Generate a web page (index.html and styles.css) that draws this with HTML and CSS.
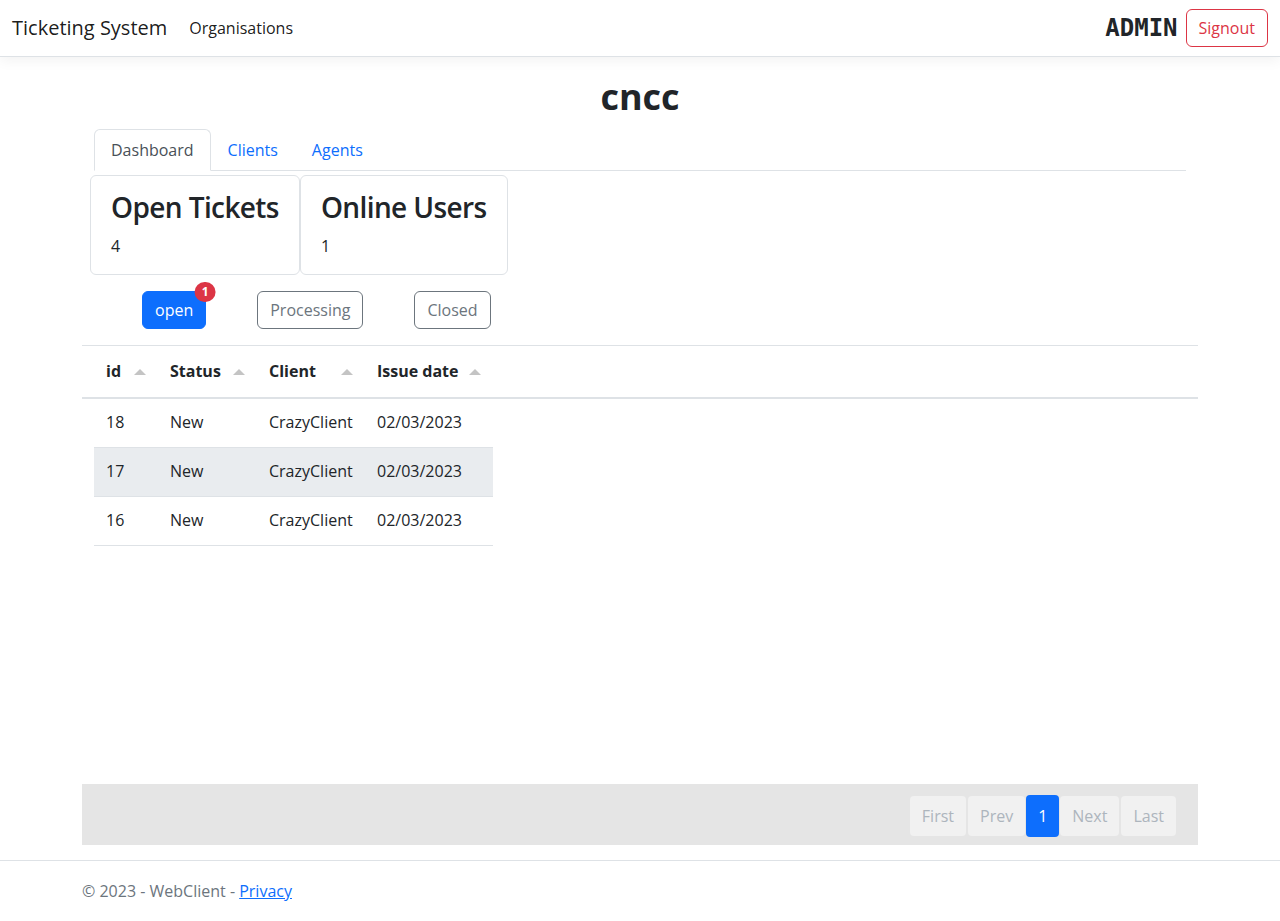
FILE: index.html
```html
<!DOCTYPE html>
<html lang="en">
<head>
<meta charset="utf-8">
<title>cncc - Ticketing System</title>
<link rel="stylesheet" href="styles.css">
</head>
<body>
<header class="navbar">
  <div class="nav-left">
    <a class="brand" href="#">Ticketing System</a>
    <a class="nav-link" href="#">Organisations</a>
  </div>
  <div class="nav-right">
    <span class="user">ADMIN</span>
    <button class="btn btn-outline-danger">Signout</button>
  </div>
</header>

<main class="container main">
  <h1 class="org-title">cncc</h1>
  <ul class="tabs">
    <li><a class="tab active" href="#">Dashboard</a></li>
    <li><a class="tab" href="#">Clients</a></li>
    <li><a class="tab" href="#">Agents</a></li>
  </ul>

  <div class="stats">
    <div class="stat-card">
      <h2 class="stat-title">Open Tickets</h2>
      <div class="stat-value">4</div>
    </div>
    <div class="stat-card">
      <h2 class="stat-title">Online Users</h2>
      <div class="stat-value">1</div>
    </div>
  </div>

  <div class="filters">
    <button class="btn btn-primary has-badge">open<span class="badge">1</span></button>
    <button class="btn btn-outline-secondary">Processing</button>
    <button class="btn btn-outline-secondary">Closed</button>
  </div>

  <div class="ticket-table">
    <div class="thead">
      <div class="row">
        <div class="th">id<span class="sort"></span></div>
        <div class="th">Status<span class="sort"></span></div>
        <div class="th">Client<span class="sort"></span></div>
        <div class="th">Issue date<span class="sort"></span></div>
      </div>
    </div>
    <div class="tbody">
      <div class="row tr">
        <div class="td">18</div><div class="td">New</div><div class="td">CrazyClient</div><div class="td">02/03/2023</div>
      </div>
      <div class="row tr hover">
        <div class="td">17</div><div class="td">New</div><div class="td">CrazyClient</div><div class="td">02/03/2023</div>
      </div>
      <div class="row tr">
        <div class="td">16</div><div class="td">New</div><div class="td">CrazyClient</div><div class="td">02/03/2023</div>
      </div>
    </div>
  </div>

  <nav class="pager-bar">
    <div class="pager">
      <span class="page disabled">First</span>
      <span class="page disabled">Prev</span>
      <span class="page active">1</span>
      <span class="page disabled">Next</span>
      <span class="page disabled">Last</span>
    </div>
  </nav>
</main>

<footer class="footer">
  <div class="container">© 2023 - WebClient - <a href="#">Privacy</a></div>
</footer>
</body>
</html>
```
FILE: styles.css
```css
* { box-sizing: border-box; }
html, body { margin: 0; padding: 0; }
body {
  font-family: "Open Sans", "Noto Sans", sans-serif;
  font-size: 16px;
  line-height: 1.5;
  color: #212529;
  background: #fff;
  min-height: 100vh;
  display: flex;
  flex-direction: column;
}
a { color: #0d6efd; }

.navbar {
  height: 57px;
  display: flex;
  align-items: center;
  justify-content: space-between;
  padding: 0 12px;
  border-bottom: 1px solid #dee2e6;
  box-shadow: 0 4px 12px rgba(0,0,0,0.05);
  margin-bottom: 16px;
}
.nav-left, .nav-right { display: flex; align-items: center; }
.brand {
  font-size: 20px;
  line-height: 30px;
  color: rgba(0,0,0,0.9);
  text-decoration: none;
  margin-right: 14px;
}
.nav-link {
  padding: 8px;
  color: rgba(0,0,0,0.9);
  text-decoration: none;
}
.user {
  font-family: "DejaVu Sans Mono", monospace;
  font-weight: bold;
  font-size: 24px;
  color: #212529;
  margin-right: 8px;
}

.btn {
  font-family: inherit;
  font-size: 16px;
  line-height: 24px;
  padding: 6px 12px;
  border: 1px solid transparent;
  border-radius: 6px;
  background: transparent;
  cursor: pointer;
}
.btn-outline-danger { color: #dc3545; border-color: #dc3545; }
.btn-primary { color: #fff; background: #0d6efd; border-color: #0d6efd; }
.btn-outline-secondary { color: #6c757d; border-color: #6c757d; }

.container {
  width: 100%;
  max-width: 1140px;
  margin: 0 auto;
  padding: 0 12px;
}
.main {
  flex: 1;
  display: flex;
  flex-direction: column;
  padding-bottom: 15px;
}

.org-title {
  margin: 0 0 8px;
  text-align: center;
  font-size: 36px;
  line-height: 48px;
  font-weight: 700;
}

.tabs {
  list-style: none;
  margin: 0 12px;
  padding: 0;
  display: flex;
  border-bottom: 1px solid #dee2e6;
}
.tab {
  display: block;
  padding: 8px 16px;
  margin-bottom: -1px;
  border: 1px solid transparent;
  border-radius: 6px 6px 0 0;
  text-decoration: none;
  color: #0d6efd;
}
.tab.active {
  color: #495057;
  background: #fff;
  border-color: #dee2e6 #dee2e6 #fff;
}

.stats {
  display: flex;
  margin: 4px 0 0 8px;
}
.stat-card {
  border: 1px solid #dee2e6;
  border-radius: 6px;
  padding: 12px 20px 16px;
}
.stat-title {
  margin: 0 0 8px;
  font-size: 28px;
  font-weight: 600;
  letter-spacing: -0.6px;
  line-height: 38px;
}

.filters {
  display: flex;
  gap: 51px;
  padding-left: 60px;
  margin-top: 16px;
}
.has-badge { position: relative; }
.badge {
  position: absolute;
  top: 0;
  left: 100%;
  transform: translate(-50%, -50%);
  background: #dc3545;
  color: #fff;
  font-size: 12px;
  font-weight: 700;
  line-height: 1;
  padding: 4px 7px;
  border-radius: 50rem;
}

.ticket-table {
  margin-top: 16px;
  border-top: 1px solid #dee2e6;
}
.thead {
  border-bottom: 2px solid #dee2e6;
  padding-left: 12px;
}
.row {
  display: grid;
  grid-template-columns: 64px 99px 108px 128px;
  width: 399px;
}
.th {
  padding: 13px 12px 14px;
  font-weight: 700;
  display: flex;
  align-items: center;
  justify-content: space-between;
}
.sort {
  width: 0;
  height: 0;
  border-left: 6px solid transparent;
  border-right: 6px solid transparent;
  border-bottom: 6px solid #c4c4c4;
  margin-top: 2px;
}
.tbody { padding-left: 12px; }
.tr { border-bottom: 1px solid #dee2e6; }
.tr.hover { background: #e9ecef; }
.td { padding: 11px 12px 13px; white-space: nowrap; }

.pager-bar {
  margin-top: auto;
  background: #e5e5e5;
  padding: 12px 22px 9px;
  display: flex;
  justify-content: flex-end;
}
.pager { display: flex; align-items: center; gap: 2px; }
.page {
  display: block;
  padding: 8px 12px;
  line-height: 24px;
  background: #f1f1f1;
  color: #adb5bd;
  border-radius: 4px;
}
.page.active {
  background: #0d6efd;
  color: #fff;
  margin: -1px -1px;
  padding: 9px 12px;
}

.footer {
  border-top: 1px solid #dee2e6;
  line-height: 60px;
  color: #6c757d;
  white-space: nowrap;
}
.footer a { color: #0d6efd; }
```
